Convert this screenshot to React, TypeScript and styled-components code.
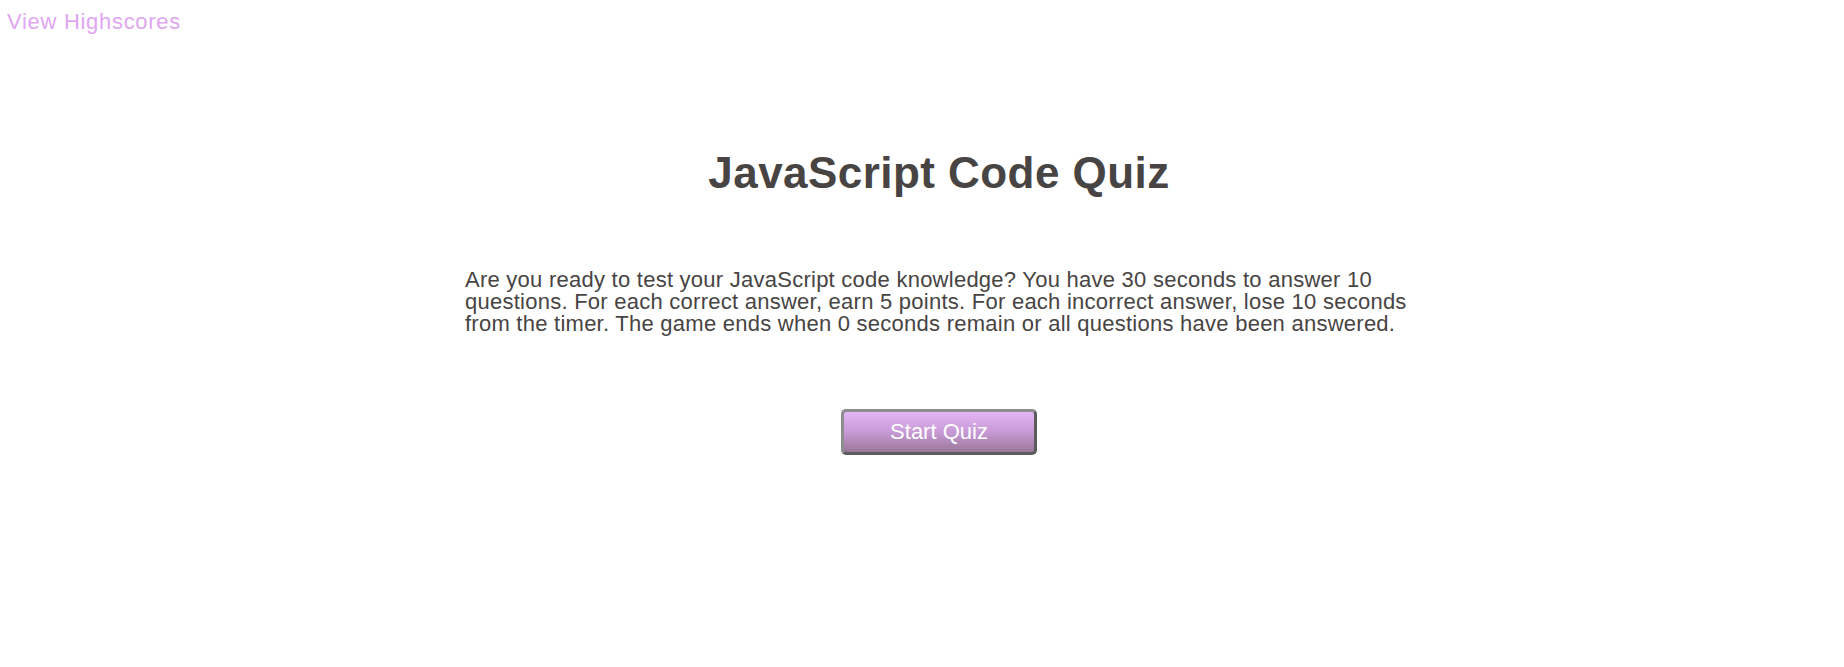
import React from "react";
import styled, { createGlobalStyle } from "styled-components";

const GlobalStyle = createGlobalStyle`
  html, body {
    margin: 0;
    padding: 0;
    background: #ffffff;
  }
  body {
    font-family: "Liberation Sans", Arial, sans-serif;
    color: #4b4646;
  }
`;

const Page = styled.div`
  display: flex;
  flex-direction: column;
  min-height: 667px;
`;

const Header = styled.header`
  display: flex;
  padding: 9px 7px 0;
`;

const HighscoresLink = styled.a`
  font-size: 22px;
  line-height: 25px;
  letter-spacing: 0.7px;
  color: #e0a6f2;
  text-decoration: none;
  cursor: pointer;
`;

const Main = styled.main`
  display: flex;
  flex-direction: column;
  align-items: center;
  width: 948px;
  margin: 0 auto;
  padding-left: 34px;
`;

const Title = styled.h1`
  margin: 115px 0 0;
  font-size: 44px;
  line-height: 48px;
  letter-spacing: 0.45px;
  font-weight: bold;
  color: #484444;
  text-align: center;
`;

const Intro = styled.p`
  margin: 72px 0 0;
  align-self: stretch;
  font-size: 22px;
  line-height: 22px;
  letter-spacing: 0.25px;
  color: #484444;
`;

const StartButton = styled.button`
  margin-top: 74px;
  width: 196px;
  height: 46px;
  border-radius: 5px;
  border: 3px solid;
  border-color: #8e8e8e #5c5c5c #5c5c5c #8e8e8e;
  background: linear-gradient(to bottom, #e4b6f5 0%, #c79ad6 50%, #9b7799 100%);
  color: #ffffff;
  font-family: "Liberation Sans", Arial, sans-serif;
  font-size: 22px;
  cursor: pointer;
`;

export default function App() {
  return (
    <Page>
      <GlobalStyle />
      <Header>
        <HighscoresLink>View Highscores</HighscoresLink>
      </Header>
      <Main>
        <Title>JavaScript Code Quiz</Title>
        <Intro>
          Are you ready to test your JavaScript code knowledge? You have 30 seconds to
          answer 10 questions. For each correct answer, earn 5 points. For each incorrect
          answer, lose 10 seconds from the timer. The game ends when 0 seconds remain or
          all questions have been answered.
        </Intro>
        <StartButton>Start Quiz</StartButton>
      </Main>
    </Page>
  );
}
